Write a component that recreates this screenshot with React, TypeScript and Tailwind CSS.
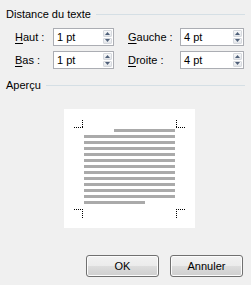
import React from "react";

function Spin({ value, width }: { value: string; width: string }) {
  return (
    <div className={`${width} h-[18px] border border-[#abadb3] bg-white flex items-stretch`}>
      <div className="flex-1 pl-[3px] text-[11px] leading-[16px] text-black">{value}</div>
      <div className="w-[10px] flex flex-col gap-px py-px pr-px">
        <div className="flex-1 border border-[#d6d9de] rounded-[1px] bg-gradient-to-b from-[#f7f8f9] to-[#e3e6ea] flex items-center justify-center">
          <svg width="5" height="3" viewBox="0 0 5 3"><path d="M2.5 0 L5 3 L0 3 Z" fill="#4f6079" /></svg>
        </div>
        <div className="flex-1 border border-[#d6d9de] rounded-[1px] bg-gradient-to-b from-[#f7f8f9] to-[#e3e6ea] flex items-center justify-center">
          <svg width="5" height="3" viewBox="0 0 5 3"><path d="M0 0 L5 0 L2.5 3 Z" fill="#4f6079" /></svg>
        </div>
      </div>
    </div>
  );
}

function Label({ first, rest }: { first: string; rest: string }) {
  return (
    <div className="text-[11px] leading-[18px] text-black">
      <span className="underline underline-offset-[2px]">{first}</span>
      {rest}
    </div>
  );
}

function Btn({ children }: { children: React.ReactNode }) {
  return (
    <div className="w-[73px] h-[22px] rounded-[3px] border border-[#707070] bg-[linear-gradient(to_bottom,#f2f2f2_0%,#ebebeb_50%,#dddddd_50%,#cfcfcf_100%)] shadow-[inset_0_0_0_1px_#fcfcfc] flex items-center justify-center text-[11px] text-black">
      {children}
    </div>
  );
}

export default function App() {
  const full = Array.from({ length: 11 }, (_, i) => 26 + i * 6);
  const dot = "1 1";
  return (
    <div
      className="w-[251px] h-[285px] bg-[#f0f0f0] flex flex-col text-black"
      style={{ fontFamily: '"Liberation Sans", Arial, sans-serif' }}
    >
      <div className="flex items-center pl-[6px] pr-[6px] mt-[7px] h-[15px]">
        <span className="text-[11px] leading-[15px]">Distance du texte</span>
        <div className="flex-1 h-px bg-[#d5dfe5] ml-[5px]" />
      </div>
      <div className="flex flex-col gap-[5px] mt-[6px]">
        <div className="flex items-center">
          <div className="pl-[15px] w-[53px]"><Label first="H" rest="aut :" /></div>
          <Spin value="1 pt" width="w-[61px]" />
          <div className="pl-[14px] w-[66px]"><Label first="G" rest="auche :" /></div>
          <Spin value="4 pt" width="w-[64px]" />
        </div>
        <div className="flex items-center">
          <div className="pl-[15px] w-[53px]"><Label first="B" rest="as :" /></div>
          <Spin value="1 pt" width="w-[61px]" />
          <div className="pl-[14px] w-[66px]"><Label first="D" rest="roite :" /></div>
          <Spin value="4 pt" width="w-[64px]" />
        </div>
      </div>
      <div className="flex items-center pl-[6px] pr-[6px] mt-[9px] h-[15px]">
        <span className="text-[11px] leading-[15px]">Aperçu</span>
        <div className="flex-1 h-px bg-[#d5dfe5] ml-[5px]" />
      </div>
      <div className="ml-[64px] mt-[16px] w-[131px] h-[119px] bg-white">
        <svg width="131" height="119" viewBox="0 0 131 119" shapeRendering="crispEdges">
          <g stroke="#000" strokeWidth="1" strokeDasharray={dot} fill="none">
            <line x1="10" y1="18.5" x2="19" y2="18.5" />
            <line x1="18.5" y1="11" x2="18.5" y2="19" />
            <line x1="112" y1="18.5" x2="122" y2="18.5" />
            <line x1="112.5" y1="11" x2="112.5" y2="19" />
            <line x1="10" y1="100.5" x2="19" y2="100.5" />
            <line x1="18.5" y1="100" x2="18.5" y2="109" />
            <line x1="112" y1="100.5" x2="122" y2="100.5" />
            <line x1="112.5" y1="100" x2="112.5" y2="109" />
          </g>
          <g fill="#aaaaaa">
            <rect x="50" y="20" width="61" height="3" />
            {full.map((y) => (
              <rect key={y} x="20" y={y} width="91" height="3" />
            ))}
            <rect x="20" y="92" width="61" height="3" />
          </g>
        </svg>
      </div>
      <div className="flex-1" />
      <div className="flex justify-end gap-[11px] pr-[8px] pb-[8px]">
        <Btn>OK</Btn>
        <Btn>Annuler</Btn>
      </div>
    </div>
  );
}
